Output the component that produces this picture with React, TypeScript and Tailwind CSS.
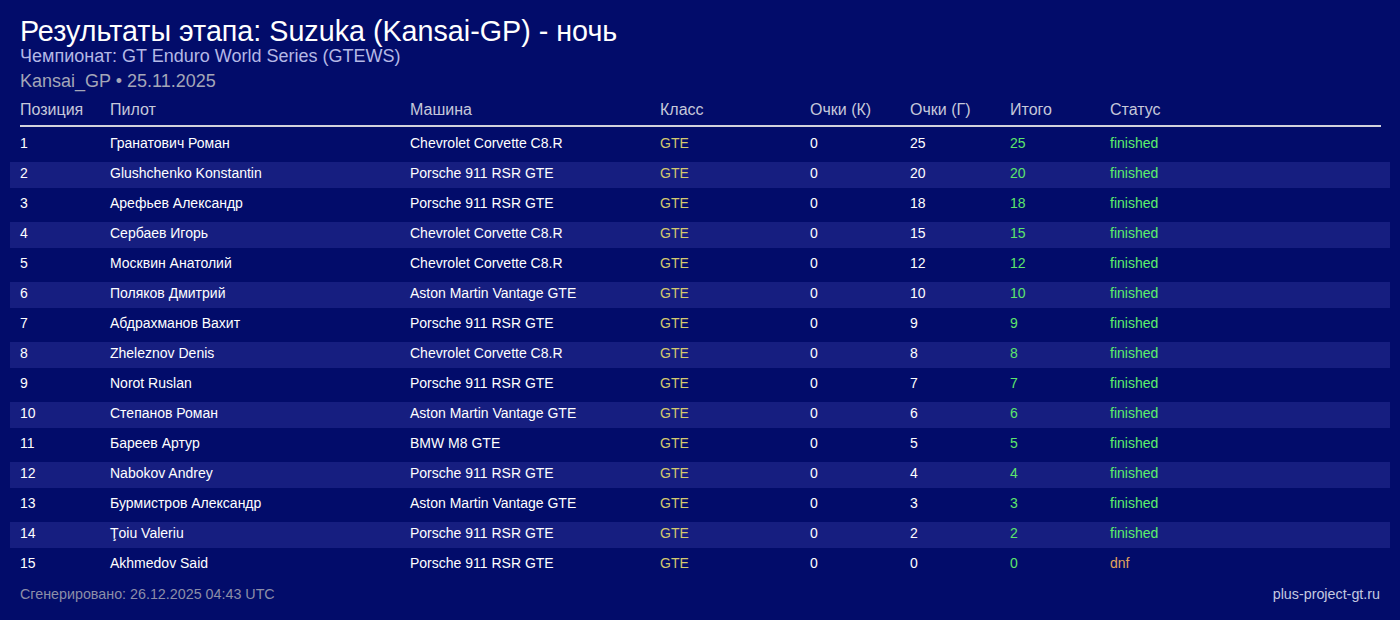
import React from 'react';

type Row = { pos: number; pilot: string; car: string; k: number; g: number; total: number; status: string };

const rows: Row[] = [
  { pos: 1, pilot: 'Гранатович Роман', car: 'Chevrolet Corvette C8.R', k: 0, g: 25, total: 25, status: 'finished' },
  { pos: 2, pilot: 'Glushchenko Konstantin', car: 'Porsche 911 RSR GTE', k: 0, g: 20, total: 20, status: 'finished' },
  { pos: 3, pilot: 'Арефьев Александр', car: 'Porsche 911 RSR GTE', k: 0, g: 18, total: 18, status: 'finished' },
  { pos: 4, pilot: 'Сербаев Игорь', car: 'Chevrolet Corvette C8.R', k: 0, g: 15, total: 15, status: 'finished' },
  { pos: 5, pilot: 'Москвин Анатолий', car: 'Chevrolet Corvette C8.R', k: 0, g: 12, total: 12, status: 'finished' },
  { pos: 6, pilot: 'Поляков Дмитрий', car: 'Aston Martin Vantage GTE', k: 0, g: 10, total: 10, status: 'finished' },
  { pos: 7, pilot: 'Абдрахманов Вахит', car: 'Porsche 911 RSR GTE', k: 0, g: 9, total: 9, status: 'finished' },
  { pos: 8, pilot: 'Zheleznov Denis', car: 'Chevrolet Corvette C8.R', k: 0, g: 8, total: 8, status: 'finished' },
  { pos: 9, pilot: 'Norot Ruslan', car: 'Porsche 911 RSR GTE', k: 0, g: 7, total: 7, status: 'finished' },
  { pos: 10, pilot: 'Степанов Роман', car: 'Aston Martin Vantage GTE', k: 0, g: 6, total: 6, status: 'finished' },
  { pos: 11, pilot: 'Бареев Артур', car: 'BMW M8 GTE', k: 0, g: 5, total: 5, status: 'finished' },
  { pos: 12, pilot: 'Nabokov Andrey', car: 'Porsche 911 RSR GTE', k: 0, g: 4, total: 4, status: 'finished' },
  { pos: 13, pilot: 'Бурмистров Александр', car: 'Aston Martin Vantage GTE', k: 0, g: 3, total: 3, status: 'finished' },
  { pos: 14, pilot: 'Ţoiu Valeriu', car: 'Porsche 911 RSR GTE', k: 0, g: 2, total: 2, status: 'finished' },
  { pos: 15, pilot: 'Akhmedov Said', car: 'Porsche 911 RSR GTE', k: 0, g: 0, total: 0, status: 'dnf' },
];

export default function App() {
  return (
    <div className="w-[1400px] h-[620px] bg-[#020c6a] text-white font-['Liberation_Sans',Arial,sans-serif] px-5 pt-[15px] overflow-hidden">
      <h1 className="text-[28.7px] leading-[32px]">Результаты этапа: Suzuka (Kansai-GP) - ночь</h1>
      <div className="text-[18px] leading-[18px] text-[#b4b8e6]">Чемпионат: GT Enduro World Series (GTEWS)</div>
      <div className="text-[18px] leading-[20px] mt-[6px] text-[#a4a6b8]">Kansai_GP • 25.11.2025</div>

      <div className="flex items-center h-[20px] mt-[9px] text-[16px] text-[#c6c8da]">
        <div className="w-[90px]">Позиция</div>
        <div className="w-[300px]">Пилот</div>
        <div className="w-[250px]">Машина</div>
        <div className="w-[150px]">Класс</div>
        <div className="w-[100px]">Очки (К)</div>
        <div className="w-[100px]">Очки (Г)</div>
        <div className="w-[100px]">Итого</div>
        <div>Статус</div>
      </div>
      <div className="h-[2px] bg-[#d2d2dc] mt-[5px] mr-[-1px]" />

      <div className="flex flex-col gap-[4px] mt-[5px] -mx-[10px] text-[14px]">
        {rows.map((r, i) => (
          <div key={r.pos} className={`flex items-center h-[26px] px-[10px] pb-[4px] ${i % 2 === 1 ? 'bg-[#161e80]' : ''}`}>
            <div className="w-[90px]">{r.pos}</div>
            <div className="w-[300px]">{r.pilot}</div>
            <div className="w-[250px]">{r.car}</div>
            <div className="w-[150px] text-[#d2c86e]">GTE</div>
            <div className="w-[100px]">{r.k}</div>
            <div className="w-[100px]">{r.g}</div>
            <div className="w-[100px] text-[#5ce66c]">{r.total}</div>
            <div className={r.status === 'dnf' ? 'text-[#e0a45c]' : 'text-[#5cf06a]'}>{r.status}</div>
          </div>
        ))}
      </div>

      <div className="flex justify-between mt-[6px] text-[14.3px]">
        <span className="text-[#8c8ea8]">Сгенерировано: 26.12.2025 04:43 UTC</span>
        <span className="text-[#c4c8e0]">plus-project-gt.ru</span>
      </div>
    </div>
  );
}
